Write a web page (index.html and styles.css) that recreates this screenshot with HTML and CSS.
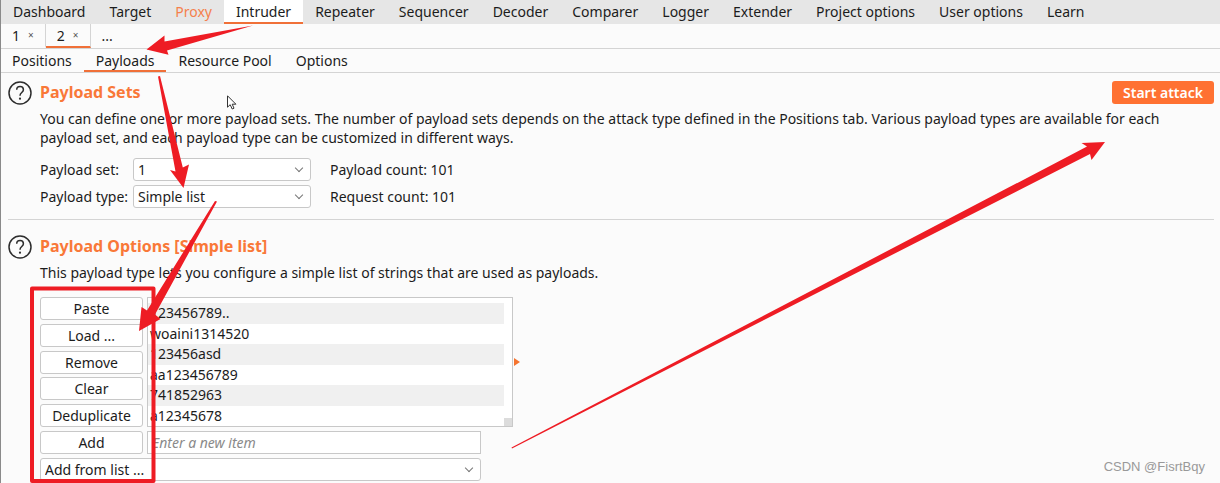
FILE: index.html
```
<!DOCTYPE html>
<html lang="en">
<head>
    <meta charset="UTF-8">
    <meta name="viewport" content="width=device-width, initial-scale=1.0">
    <title>Intruder - Payloads</title>
    <link rel="stylesheet" href="styles.css">
</head>
<body>

<!-- Main tool tabs -->
<nav class="main-tabs">
    <a href="#">Dashboard</a>
    <a href="#">Target</a>
    <a href="#" class="alert">Proxy</a>
    <a href="#" class="active">Intruder</a>
    <a href="#">Repeater</a>
    <a href="#">Sequencer</a>
    <a href="#">Decoder</a>
    <a href="#">Comparer</a>
    <a href="#">Logger</a>
    <a href="#">Extender</a>
    <a href="#">Project options</a>
    <a href="#">User options</a>
    <a href="#">Learn</a>
</nav>

<!-- Attack tabs -->
<nav class="attack-tabs">
    <a href="#">1 <span class="close">×</span></a>
    <a href="#" class="active">2 <span class="close">×</span></a>
    <a href="#" class="more">...</a>
</nav>

<nav class="sub-tabs">
    <a href="#">Positions</a>
    <a href="#" class="active">Payloads</a>
    <a href="#">Resource Pool</a>
    <a href="#">Options</a>
</nav>

<main>
    <section class="panel">
        <button class="help" aria-label="Help">
            <svg viewBox="0 0 24 24" width="24" height="24">
                <circle cx="12" cy="12" r="11"/>
                <path d="M8.700 8.800C8.700 6.700 10.200 5.600 12.100 5.600C14 5.600 15.400 6.700 15.400 8.700C15.400 11.400 12 11.700 12 14.700"/>
                <circle class="dot" cx="12" cy="17.700" r="1.100"/>
            </svg>
        </button>
        <div class="panel-body">
            <div class="panel-head">
                <h2>Payload Sets</h2>
                <button class="start-btn">Start attack</button>
            </div>
            <p>You can define one or more payload sets. The number of payload sets depends on the attack type defined in the Positions tab. Various payload types are available for each payload set, and each payload type can be customized in different ways.</p>
            <div class="set-form">
                <label for="payload-set">Payload set:</label>
                <div class="select-box">
                    <select id="payload-set"><option>1</option></select>
                </div>
                <span class="count">Payload count: 101</span>
                <label for="payload-type">Payload type:</label>
                <div class="select-box">
                    <select id="payload-type"><option>Simple list</option></select>
                </div>
                <span class="count">Request count: 101</span>
            </div>
        </div>
    </section>

    <section class="panel options">
        <button class="help" aria-label="Help">
            <svg viewBox="0 0 24 24" width="24" height="24">
                <circle cx="12" cy="12" r="11"/>
                <path d="M8.700 8.800C8.700 6.700 10.200 5.600 12.100 5.600C14 5.600 15.400 6.700 15.400 8.700C15.400 11.400 12 11.700 12 14.700"/>
                <circle class="dot" cx="12" cy="17.700" r="1.100"/>
            </svg>
        </button>
        <div class="panel-body">
            <div class="panel-head">
                <h2>Payload Options [Simple list]</h2>
            </div>
            <p>This payload type lets you configure a simple list of strings that are used as payloads.</p>
            <div class="list-editor">
                <div class="list-row">
                    <div class="list-buttons">
                        <button>Paste</button>
                        <button>Load ...</button>
                        <button>Remove</button>
                        <button>Clear</button>
                        <button>Deduplicate</button>
                    </div>
                    <div class="list-box">
                        <ul>
                            <li>123456789..</li>
                            <li>woaini1314520</li>
                            <li>123456asd</li>
                            <li>aa123456789</li>
                            <li>741852963</li>
                            <li>a12345678</li>
                        </ul>
                        <div class="corner"></div>
                    </div>
                    <div class="marker"></div>
                </div>
                <div class="add-row">
                    <button>Add</button>
                    <input type="text" placeholder="Enter a new item" aria-label="New item">
                </div>
                <div class="select-box from-list">
                    <select aria-label="Add from list"><option>Add from list ...</option></select>
                </div>
            </div>
        </div>
    </section>
</main>

<!-- Arrows and frame drawn over the window -->
<svg class="notes" width="1220" height="483" viewBox="0 0 1220 483">
    <path d="M253 25.500L167 50.500L168.500 54.800L146.500 49.500L164.500 35.500L164.500 41.500Z"/>
    <path d="M158 76.500L160 76L182.800 167.500L189 164.500L183.500 188L170 170L175.500 171.500Z"/>
    <path d="M217 201.500L155 314.500L160.500 319L139 331L141.500 307L147 310.500L215 201Z"/>
    <path d="M511.500 447.500L1087 146.500L1081.500 143L1105 142L1091.500 160L1090 154L512 448.500Z"/>
    <rect x="32" y="288.500" width="121.500" height="192.500"/>
</svg>
<svg class="cursor" width="10" height="15" viewBox="0 0 10 15">
    <path d="M.5 .8V12.200L3.200 9.700L5.200 14L7 13.200L5.200 9.200H8.900Z"/>
</svg>
<div class="watermark">CSDN @FisrtBqy</div>

</body>
</html>
```
FILE: styles.css
```
* {
    box-sizing: border-box;
}

body {
    margin: 0;
    position: relative;
    min-height: 100vh;
    overflow: hidden;
    border-left: 1px solid #8a8a8a;
    background-color: #fbfbfb;
    color: #1c1c1c;
    font-family: "Noto Sans", "Open Sans", sans-serif;
    font-size: 14px;
    line-height: 19px;
}

a {
    color: inherit;
    text-decoration: none;
}

button,
input,
select {
    font: inherit;
    color: inherit;
}

/* Tab bars */
nav {
    display: flex;
}

nav a {
    display: flex;
    align-items: center;
    padding: 0 12px;
    border-bottom: 2px solid transparent;
}

nav .active {
    border-bottom-color: #f07038;
}

.main-tabs {
    height: 24px;
    background-color: #e6e6e6;
}

.main-tabs .active {
    background-color: #fff;
}

.main-tabs .alert {
    color: #f5804c;
}

.attack-tabs,
.sub-tabs {
    height: 25px;
    border-bottom: 1px solid #d4d4d4;
}

.sub-tabs {
    height: 24px;
}

.sub-tabs a {
    padding-top: 2px;
}

.sub-tabs a:first-child {
    padding-left: 11px;
}

.attack-tabs a {
    gap: 8px;
    padding: 1px 11px 0;
    border-right: 1px solid #d4d4d4;
}

.attack-tabs .more {
    border-right: none;
}

.close {
    font-size: 10px;
    color: #555;
}

/* Panels */
.panel {
    display: flex;
    gap: 8px;
    margin: 0 6px 0 7px;
    padding: 8px 0 11px;
}

.options {
    padding-top: 15px;
    border-top: 1px solid #d4d4d4;
}

.panel-body {
    flex: 1;
}

.help {
    width: 24px;
    height: 24px;
    padding: 0;
    border: none;
    background: none;
}

.help svg {
    display: block;
    fill: none;
    stroke: #2d2d2d;
    stroke-width: 1.5;
}

.help .dot {
    fill: #2d2d2d;
    stroke: none;
}

.panel-head {
    display: flex;
    justify-content: space-between;
    align-items: center;
    height: 23px;
}

h2 {
    margin: 0;
    font-size: 16px;
    color: #f97838;
}

.start-btn {
    height: 23px;
    padding: 0 11px;
    border: none;
    border-radius: 3px;
    background-color: #ff7132;
    color: #fff;
    font-weight: 600;
}

p {
    margin: 5px 40px 0 0;
}

.set-form {
    display: grid;
    grid-template-columns: 89px 178px 1fr;
    gap: 4px;
    align-items: center;
    margin-top: 11px;
}

.count {
    margin-left: 15px;
}

.select-box {
    position: relative;
}

.select-box::after {
    content: "";
    position: absolute;
    top: 7px;
    right: 9px;
    width: 5px;
    height: 5px;
    border-right: 1px solid #777;
    border-bottom: 1px solid #777;
    transform: rotate(45deg);
    pointer-events: none;
}

select,
input,
.list-editor button {
    display: block;
    width: 100%;
    height: 23px;
    padding: 0 4px;
    border: 1px solid #c8c8c8;
    border-radius: 3px;
    background-color: #fff;
    appearance: none;
}

/* Payload list */
.list-editor {
    display: flex;
    flex-direction: column;
    gap: 4px;
    margin-top: 15px;
}

.list-row,
.add-row {
    display: flex;
    gap: 4px;
}

.list-buttons {
    display: flex;
    flex-direction: column;
    justify-content: space-between;
    width: 103px;
}

.list-box {
    display: flex;
    width: 366px;
    height: 130px;
    border: 1px solid #c8c8c8;
    background-color: #fff;
}

.list-box ul {
    flex: 1;
    display: grid;
    grid-auto-rows: 1fr;
    margin: 0;
    padding: 5px 0 0;
    list-style: none;
}

.list-box li {
    padding-left: 2px;
}

.list-box li:nth-child(odd) {
    background-color: #f0f0f0;
}

.corner {
    align-self: flex-end;
    width: 8px;
    height: 8px;
    background-color: #dcdcdc;
}

.marker {
    align-self: center;
    margin-left: -3px;
    border: 4px solid transparent;
    border-left: 6px solid #f5742f;
    border-right: none;
}

.list-editor .add-row button {
    width: 103px;
}

.add-row input {
    width: 334px;
    border-radius: 0;
}

input::placeholder {
    color: #8a8a8a;
    font-style: italic;
}

.from-list {
    width: 441px;
}

/* Overlay */
.notes {
    position: absolute;
    top: 0;
    left: -1px;
    fill: #ee1c24;
    pointer-events: none;
}

.notes rect {
    fill: none;
    stroke: #ee1c24;
    stroke-width: 4;
    stroke-linejoin: round;
}

.cursor {
    position: absolute;
    top: 95px;
    left: 226px;
    fill: #fff;
    stroke: #333;
}

.watermark {
    position: absolute;
    right: 15px;
    bottom: 16px;
    color: #999;
    font-family: "Liberation Sans", sans-serif;
    font-size: 13px;
}
```
